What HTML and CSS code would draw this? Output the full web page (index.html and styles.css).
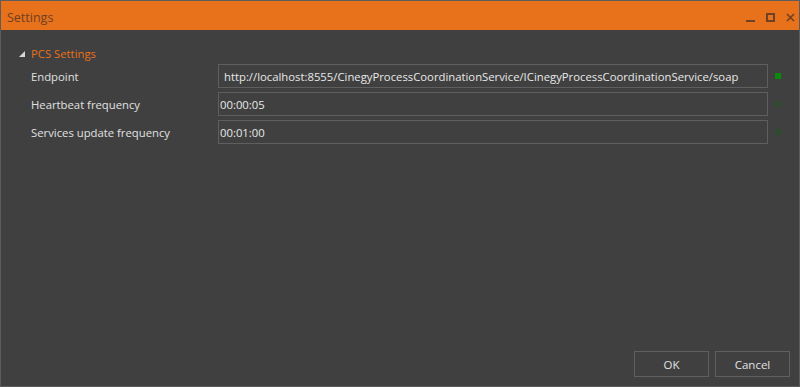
FILE: index.html
```html
<!DOCTYPE html>
<html>
<head>
<meta charset="utf-8">
<link rel="stylesheet" href="styles.css">
</head>
<body>
<div class="window">
  <div class="titlebar">
    <span class="title">Settings</span>
    <div class="controls">
      <svg class="ctl" width="10" height="10" viewBox="0 0 10 10"><rect x="0" y="7" width="9" height="2" fill="currentColor"/></svg>
      <svg class="ctl" width="10" height="10" viewBox="0 0 10 10"><rect x="1" y="1" width="7" height="7" fill="none" stroke="currentColor" stroke-width="2"/></svg>
      <svg class="ctl" width="10" height="10" viewBox="0 0 10 10"><path d="M1 1 L8 8 M8 1 L1 8" stroke="currentColor" stroke-width="1.6" fill="none"/></svg>
    </div>
  </div>
  <div class="content">
    <div class="section-head">
      <span class="tri"></span>
      <span class="section-title">PCS Settings</span>
    </div>
    <div class="rows">
      <div class="row">
        <span class="label">Endpoint</span>
        <div class="field field-url">http://localhost:8555/CinegyProcessCoordinationService/ICinegyProcessCoordinationService/soap</div>
        <span class="dot dot-on"></span>
      </div>
      <div class="row">
        <span class="label">Heartbeat frequency</span>
        <div class="field">00:00:05</div>
        <span class="dot"></span>
      </div>
      <div class="row">
        <span class="label">Services update frequency</span>
        <div class="field">00:01:00</div>
        <span class="dot"></span>
      </div>
    </div>
  </div>
  <div class="footer">
    <button class="btn">OK</button>
    <button class="btn">Cancel</button>
  </div>
</div>
</body>
</html>
```
FILE: styles.css
```css
html, body {
  margin: 0;
  padding: 0;
  background: #404040;
}
body {
  font-family: "Open Sans", "Noto Sans", sans-serif;
  font-size: 11.3px;
}
.window {
  width: 800px;
  height: 387px;
  box-sizing: border-box;
  border: 1px solid #5c5c5c;
  background: #404040;
  display: flex;
  flex-direction: column;
}
.titlebar {
  height: 29px;
  background: #e8711b;
  display: flex;
  align-items: center;
  justify-content: space-between;
  padding-left: 6px;
  padding-right: 3px;
  color: #6e4024;
}
.title {
  font-size: 12.5px;
  padding-top: 3px;
}
.controls {
  display: flex;
  gap: 10px;
  align-items: center;
  padding-top: 5px;
}
.ctl {
  display: block;
}
.content {
  flex: 1;
  padding: 15px 0 0 18px;
}
.section-head {
  display: flex;
  align-items: center;
  height: 16px;
}
.tri {
  width: 0;
  height: 0;
  border-left: 6px solid transparent;
  border-bottom: 6px solid #d8d8d8;
  margin-right: 6px;
  margin-top: 1px;
}
.section-title {
  color: #e8711b;
}
.rows {
  display: flex;
  flex-direction: column;
  gap: 4px;
  margin-top: 3px;
  padding-left: 12px;
}
.row {
  display: flex;
  align-items: center;
  height: 24px;
}
.label {
  width: 187px;
  color: #e0e0e0;
}
.field {
  width: 550px;
  height: 24px;
  box-sizing: border-box;
  border: 1px solid #5f5f5f;
  color: #e8e8e8;
  display: flex;
  align-items: center;
  padding-left: 1px;
  white-space: nowrap;
  overflow: hidden;
}
.field-url {
  padding-left: 5px;
}
.dot {
  width: 6px;
  height: 6px;
  margin-left: 7px;
  background: #2f4a2f;
}
.dot-on {
  background: #0a8a0a;
}
.footer {
  display: flex;
  justify-content: flex-end;
  gap: 6px;
  padding: 0 9px 9px 0;
}
.btn {
  width: 75px;
  height: 26px;
  background: #404040;
  border: 1px solid #5f5f5f;
  color: #e0e0e0;
  font-family: inherit;
  font-size: 11.5px;
  padding: 0;
}
```
